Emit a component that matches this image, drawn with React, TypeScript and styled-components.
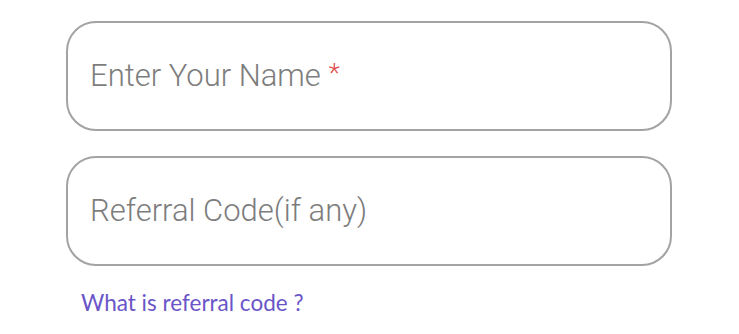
import React from "react";
import styled, { createGlobalStyle } from "styled-components";

const GlobalStyle = createGlobalStyle`
  html, body {
    margin: 0;
    padding: 0;
    background: #ffffff;
  }
`;

const Page = styled.main`
  width: 739px;
  height: 334px;
  box-sizing: border-box;
  padding: 21px 0 0 66px;
  display: flex;
  flex-direction: column;
  gap: 25px;
`;

const Field = styled.label`
  width: 606px;
  height: 110px;
  box-sizing: border-box;
  border: 2px solid #a3a3a3;
  border-radius: 30px;
  display: flex;
  align-items: center;
  padding-left: 22px;
`;

const Placeholder = styled.span`
  font-family: Roboto, "Liberation Sans", sans-serif;
  font-weight: 300;
  font-size: 31px;
  color: #7d7d7d;
  margin-top: -2px;
`;

const Required = styled.span`
  color: #e04b4b;
  font-size: 26px;
  margin-left: 8px;
  vertical-align: 4px;
`;

const HelpLink = styled.a`
  font-family: Lato, "Open Sans", sans-serif;
  font-size: 22.5px;
  color: #6a55c8;
  text-decoration: none;
  margin: -2px 0 0 15px;
`;

export default function App() {
  return (
    <>
      <GlobalStyle />
      <Page>
        <Field>
          <Placeholder>
            Enter Your Name<Required>*</Required>
          </Placeholder>
        </Field>
        <Field>
          <Placeholder>Referral Code(if any)</Placeholder>
        </Field>
        <HelpLink href="#">What is referral code ?</HelpLink>
      </Page>
    </>
  );
}
